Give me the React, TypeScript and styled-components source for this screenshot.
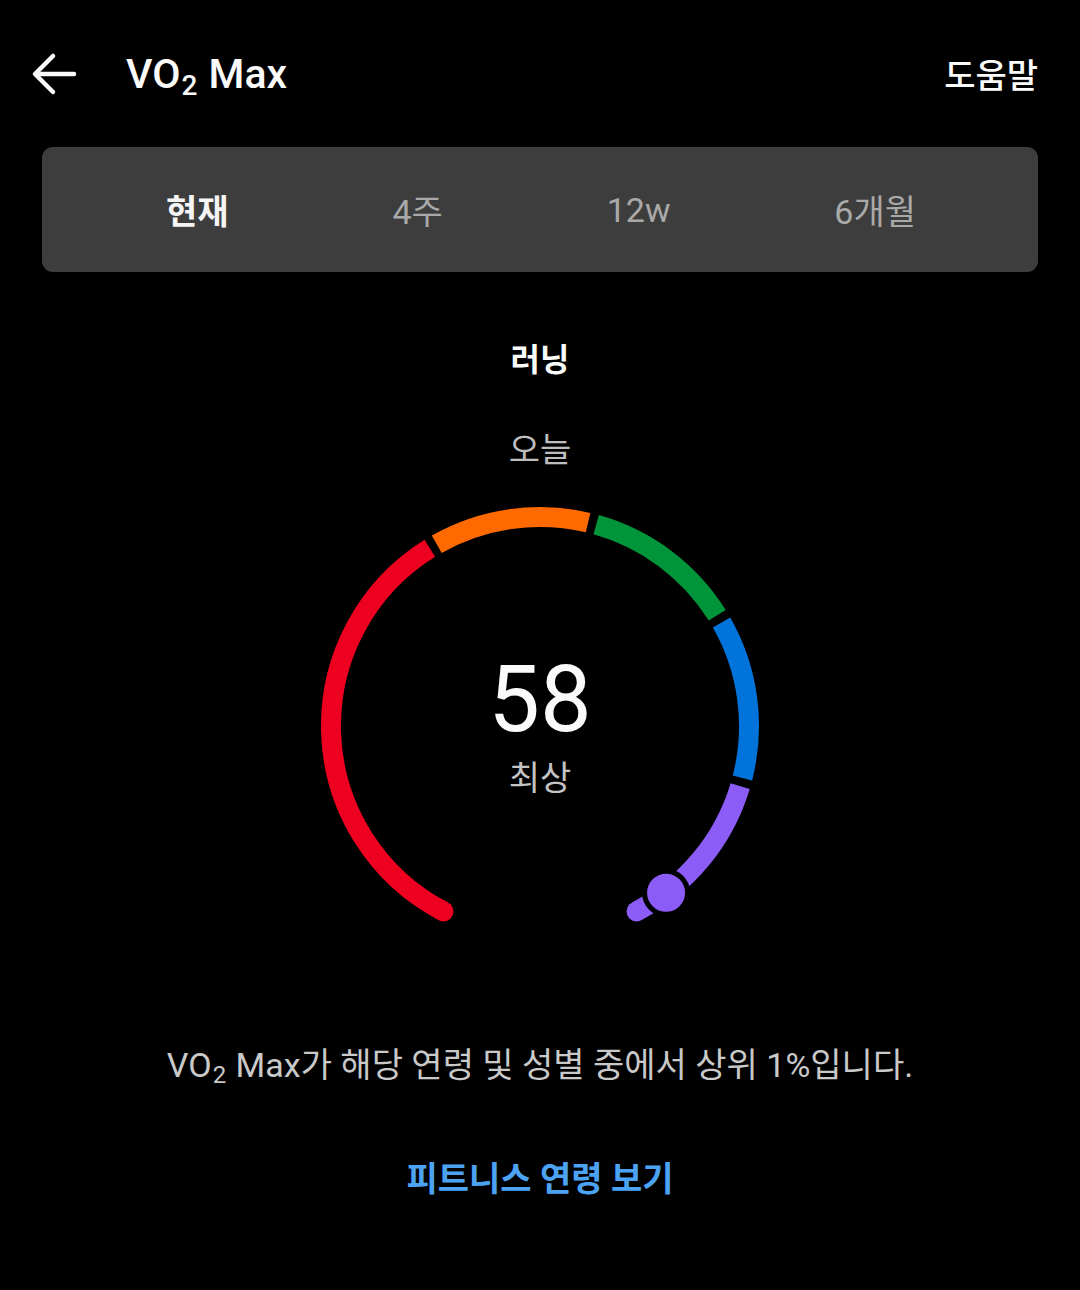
import React from 'react';
import styled, { createGlobalStyle } from 'styled-components';

const GlobalStyle = createGlobalStyle`
  html, body {
    margin: 0;
    padding: 0;
    background: #000;
  }
  body {
    font-family: Roboto, "Noto Sans CJK KR", sans-serif;
    color: #fafafa;
  }
`;

type Zone = { from: number; to: number; color: string };

const CX = 230;
const CY = 230;
const R = 209;
const STROKE = 20;

const zones: Zone[] = [
  { from: -152.5, to: -31.8, color: '#ee0021' },
  { from: -29.6, to: 13.3, color: '#ff6a00' },
  { from: 15.6, to: 58.0, color: '#00953a' },
  { from: 60.3, to: 104.4, color: '#0074db' },
  { from: 106.7, to: 152.5, color: '#8b5cf6' },
];

const polar = (deg: number, r = R) => {
  const rad = (deg * Math.PI) / 180;
  return { x: CX + r * Math.sin(rad), y: CY - r * Math.cos(rad) };
};

const arcPath = (from: number, to: number) => {
  const a = polar(from);
  const b = polar(to);
  const large = to - from > 180 ? 1 : 0;
  return `M ${a.x.toFixed(2)} ${a.y.toFixed(2)} A ${R} ${R} 0 ${large} 1 ${b.x.toFixed(2)} ${b.y.toFixed(2)}`;
};

const Page = styled.div`
  width: 1080px;
  min-height: 1290px;
  background: #000;
  display: flex;
  flex-direction: column;
`;

const Header = styled.header`
  height: 147px;
  display: flex;
  align-items: center;
  padding: 0 42px 0 30px;
  box-sizing: border-box;
`;

const BackButton = styled.button`
  width: 48px;
  height: 48px;
  padding: 0;
  border: none;
  background: none;
  display: flex;
  align-items: center;
  justify-content: center;
  cursor: pointer;
`;

const Title = styled.h1`
  margin: 0 0 0 48px;
  font-size: 41px;
  font-weight: 500;
  color: #fafafa;
  flex: 1;
`;

const Sub = styled.sub<{ size: number }>`
  font-size: ${({ size }) => size}px;
  vertical-align: baseline;
  position: relative;
  top: 0.25em;
  margin: 0 1px;
`;

const HelpLink = styled.span`
  font-size: 34px;
  color: #fafafa;
  font-weight: 500;
`;

const TabBar = styled.nav`
  margin: 0 42px;
  height: 125px;
  background: #3d3d3d;
  border-radius: 11px;
  display: flex;
  align-items: center;
  justify-content: space-between;
  padding: 0 122px 0 124px;
  box-sizing: border-box;
`;

const Tab = styled.span<{ active?: boolean }>`
  font-size: 34px;
  color: ${({ active }) => (active ? '#f5f5f5' : '#a9a9a9')};
  font-weight: ${({ active }) => (active ? 700 : 400)};
`;

const Center = styled.section`
  display: flex;
  flex-direction: column;
  align-items: center;
`;

const Sport = styled.div`
  margin-top: 64px;
  line-height: 48px;
  font-size: 32px;
  font-weight: 700;
  color: #fafafa;
`;

const Period = styled.div`
  margin-top: 42px;
  line-height: 48px;
  font-size: 34px;
  color: #bdbdbd;
`;

const GaugeWrap = styled.div`
  margin-top: 22px;
  width: 460px;
  height: 440px;
  position: relative;
`;

const GaugeText = styled.div`
  position: absolute;
  left: 0;
  right: 0;
  top: 154px;
  display: flex;
  flex-direction: column;
  align-items: center;
`;

const Value = styled.div`
  font-size: 92px;
  line-height: 100px;
  color: #fafafa;
  font-weight: 400;
`;

const Level = styled.div`
  margin-top: 4px;
  font-size: 34px;
  line-height: 48px;
  color: #c4c4c4;
`;

const Description = styled.p`
  margin: 105px 0 0;
  line-height: 48px;
  font-size: 34px;
  color: #c9c9c9;
  text-align: center;
`;

const FitnessLink = styled.a`
  margin-top: 62px;
  line-height: 48px;
  font-size: 34px;
  font-weight: 700;
  color: #4da3f3;
  text-decoration: none;
  cursor: pointer;
`;

const Gauge: React.FC<{ marker: number }> = ({ marker }) => {
  const start = polar(zones[0].from);
  const end = polar(zones[zones.length - 1].to);
  const m = polar(marker);
  return (
    <svg width="460" height="440" viewBox="0 0 460 440">
      {zones.map((z) => (
        <path key={z.from} d={arcPath(z.from, z.to)} stroke={z.color} strokeWidth={STROKE} fill="none" />
      ))}
      <circle cx={start.x} cy={start.y} r={STROKE / 2} fill={zones[0].color} />
      <circle cx={end.x} cy={end.y} r={STROKE / 2} fill={zones[zones.length - 1].color} />
      <circle cx={m.x} cy={m.y} r={21.5} fill="#8b5cf6" stroke="#000" strokeWidth={5} />
    </svg>
  );
};

const App: React.FC = () => {
  return (
    <Page>
      <GlobalStyle />
      <Header>
        <BackButton aria-label="뒤로">
          <svg width="46" height="46" viewBox="0 0 46 46" fill="none" stroke="#fafafa" strokeWidth="4.5" strokeLinecap="round" strokeLinejoin="round">
            <path d="M43 23H5" />
            <path d="M22 5L4 23L22 41" />
          </svg>
        </BackButton>
        <Title>
          VO<Sub size={28}>2</Sub> Max
        </Title>
        <HelpLink>도움말</HelpLink>
      </Header>

      <TabBar>
        <Tab active>현재</Tab>
        <Tab>4주</Tab>
        <Tab>12w</Tab>
        <Tab>6개월</Tab>
      </TabBar>

      <Center>
        <Sport>러닝</Sport>
        <Period>오늘</Period>
        <GaugeWrap>
          <Gauge marker={142.9} />
          <GaugeText>
            <Value>58</Value>
            <Level>최상</Level>
          </GaugeText>
        </GaugeWrap>
        <Description>
          VO<Sub size={24}>2</Sub> Max가 해당 연령 및 성별 중에서 상위 1%입니다.
        </Description>
        <FitnessLink>피트니스 연령 보기</FitnessLink>
      </Center>
    </Page>
  );
};

export default App;
